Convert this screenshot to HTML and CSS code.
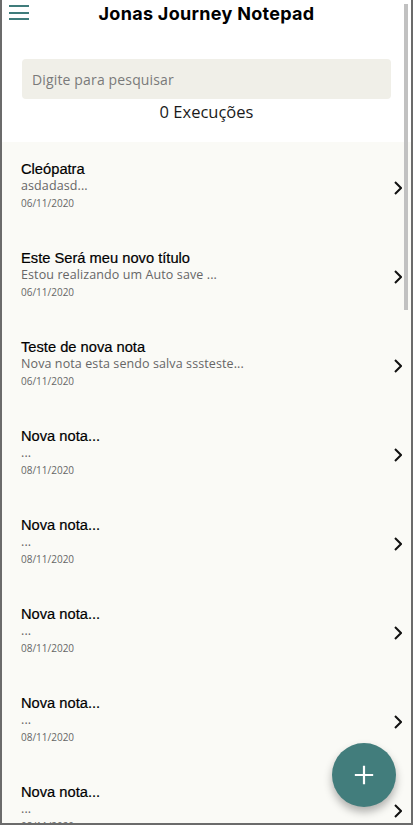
FILE: index.html
```html
<!DOCTYPE html>
<html lang="pt-BR">
<head>
<meta charset="utf-8">
<title>Jonas Journey Notepad</title>
<link rel="stylesheet" href="styles.css">
</head>
<body>
<div class="frame">
  <header class="header">
    <div class="topbar">
      <button class="menu" aria-label="Menu">
        <span></span><span></span><span></span>
      </button>
      <h1 class="title">Jonas Journey Notepad</h1>
    </div>
    <div class="search">Digite para pesquisar</div>
    <div class="count">0 Execuções</div>
  </header>
  <ul class="notes">
    <li class="note"><div class="text"><div class="note-title">Cleópatra</div><div class="note-body">asdadasd...</div><div class="note-date">06/11/2020</div></div><svg class="chev" viewBox="0 0 8 14"><path d="M1 1l6 6-6 6"/></svg></li>
    <li class="note"><div class="text"><div class="note-title">Este Será meu novo título</div><div class="note-body">Estou realizando um Auto save ...</div><div class="note-date">06/11/2020</div></div><svg class="chev" viewBox="0 0 8 14"><path d="M1 1l6 6-6 6"/></svg></li>
    <li class="note"><div class="text"><div class="note-title">Teste de nova nota</div><div class="note-body">Nova nota esta sendo salva sssteste...</div><div class="note-date">06/11/2020</div></div><svg class="chev" viewBox="0 0 8 14"><path d="M1 1l6 6-6 6"/></svg></li>
    <li class="note"><div class="text"><div class="note-title">Nova nota...</div><div class="note-body">...</div><div class="note-date">08/11/2020</div></div><svg class="chev" viewBox="0 0 8 14"><path d="M1 1l6 6-6 6"/></svg></li>
    <li class="note"><div class="text"><div class="note-title">Nova nota...</div><div class="note-body">...</div><div class="note-date">08/11/2020</div></div><svg class="chev" viewBox="0 0 8 14"><path d="M1 1l6 6-6 6"/></svg></li>
    <li class="note"><div class="text"><div class="note-title">Nova nota...</div><div class="note-body">...</div><div class="note-date">08/11/2020</div></div><svg class="chev" viewBox="0 0 8 14"><path d="M1 1l6 6-6 6"/></svg></li>
    <li class="note"><div class="text"><div class="note-title">Nova nota...</div><div class="note-body">...</div><div class="note-date">08/11/2020</div></div><svg class="chev" viewBox="0 0 8 14"><path d="M1 1l6 6-6 6"/></svg></li>
    <li class="note"><div class="text"><div class="note-title">Nova nota...</div><div class="note-body">...</div><div class="note-date">08/11/2020</div></div><svg class="chev" viewBox="0 0 8 14"><path d="M1 1l6 6-6 6"/></svg></li>
  </ul>
  <div class="scroll-thumb"></div>
  <button class="fab" aria-label="Nova nota">
    <svg viewBox="0 0 24 24"><path d="M12 2v20M2 12h20"/></svg>
  </button>
</div>
</body>
</html>
```

FILE: styles.css
```css
* { box-sizing: border-box; }
html, body { margin: 0; padding: 0; }
body { font-family: "Open Sans", "Liberation Sans", sans-serif; background: #fafaf6; }

.frame {
  position: relative;
  width: 413px;
  height: 825px;
  border-left: 2px solid #6b6b6b;
  border-right: 2px solid #6b6b6b;
  border-bottom: 2px solid #6b6b6b;
  background: #fafaf6;
  overflow: hidden;
}

.header {
  background: #ffffff;
  height: 142px;
  display: flex;
  flex-direction: column;
}

.topbar {
  position: relative;
  height: 28px;
  display: flex;
  align-items: center;
  justify-content: center;
}

.menu {
  position: absolute;
  left: 7px;
  top: 5px;
  width: 20px;
  height: 15px;
  padding: 0;
  border: 0;
  background: none;
  display: flex;
  flex-direction: column;
  justify-content: space-between;
}
.menu span {
  display: block;
  height: 2px;
  width: 20px;
  background: #3f7c7b;
}

.title {
  margin: 0;
  font-family: "Inter", sans-serif;
  font-weight: 700;
  font-size: 18px;
  line-height: 28px;
  color: #000;
  letter-spacing: 0.3px;
}

.search {
  margin: 31px 20px 0 20px;
  height: 40px;
  background: #f0efe8;
  border-radius: 4px;
  padding-left: 10px;
  display: flex;
  align-items: center;
  font-size: 14px;
  letter-spacing: 0.15px;
  color: #7a7a7a;
}

.count {
  text-align: center;
  font-size: 16.5px;
  color: #1a1a1a;
  margin-top: 1px;
  line-height: 24px;
}

.notes {
  list-style: none;
  margin: 0;
  padding: 0;
}

.note {
  height: 89px;
  display: flex;
  align-items: center;
  padding: 0 9px 0 19px;
}
.text { flex: 1; margin-top: 0; }
.note-title {
  font-family: "Liberation Sans", Arial, sans-serif;
  font-size: 14.7px;
  line-height: 17px;
  color: #000;
  -webkit-text-stroke: 0.2px #000;
}
.note-body {
  font-size: 12.5px;
  line-height: 16px;
  letter-spacing: 0.1px;
  color: #666;
}
.note-date {
  font-size: 10px;
  line-height: 18px;
  color: #666;
}
.chev {
  width: 8px;
  height: 14px;
  fill: none;
  stroke: #111;
  stroke-width: 2;
  margin-top: 2px;
}

.scroll-thumb {
  position: absolute;
  left: 402px;
  top: 4px;
  width: 4px;
  height: 306px;
  background: #c1c1c1;
}

.fab {
  position: absolute;
  right: 15px;
  bottom: 16px;
  width: 64px;
  height: 64px;
  border-radius: 50%;
  border: 0;
  padding: 0;
  background: #427d7c;
  box-shadow: 0 5px 8px rgba(0,0,0,0.3);
  display: flex;
  align-items: center;
  justify-content: center;
}
.fab svg {
  width: 22px;
  height: 22px;
  fill: none;
  stroke: #fff;
  stroke-width: 2.4;
}
```
